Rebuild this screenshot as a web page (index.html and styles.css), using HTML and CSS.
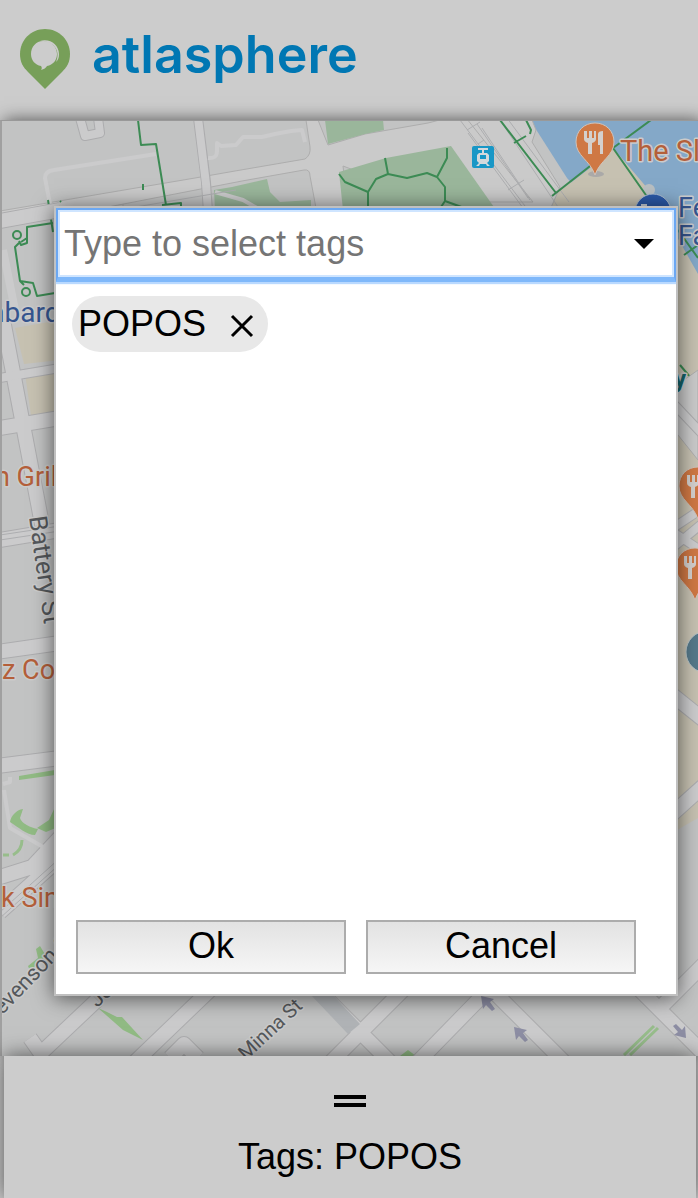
FILE: index.html
```html
<!DOCTYPE html>
<html lang="en">
<head>
<meta charset="utf-8">
<meta name="viewport" content="width=device-width, initial-scale=1">
<title>atlasphere</title>
<link rel="stylesheet" href="styles.css">
</head>
<body>
<div class="app">
  <header class="header">
    <svg class="logo-pin" viewBox="0 0 50 60" aria-hidden="true">
      <path fill="#779f59" d="M25 0C11 0 0 11 0 25c0 8 3 13 8 18l17 17 17-17c5-5 8-10 8-18C50 11 39 0 25 0z"/>
      <path fill="#ccc" d="M23 12c-7 0-12 6-12 13 0 6 4 11 10 12 1 1 1 3 0 4 3-1 5-2 6-4 6-1 10-6 10-12 0-7-6-13-14-13z"/>
      <path fill="#ccc" d="M20 12c10-3 19 4 19 13 0 4-1 6-3 8 5-11-2-21-16-21z"/>
    </svg>
    <span class="logo-name">atlasphere</span>
  </header>

  <main class="map">
    <svg class="map-canvas" viewBox="2 121 696 935" preserveAspectRatio="xMidYMid slice" aria-hidden="true">
      <rect y="120" width="698" height="936" fill="#c2c3c3"/>

      <!-- waterfront -->
      <path class="water" d="M530 120h168v200L600 215l-33-37z"/>
      <path class="land" d="M548 200l46-35 20-16 40 47 44 78v600H640V300z"/>
      <path class="street" d="M440 120h92l4 10-4 12 28 45-10 23h-60z"/>
      <circle cx="649" cy="190" r="6" fill="#b9bfc2"/>

      <!-- embarcadero and side streets -->
      <path class="street" d="M0 211l195-33 40-7 70-12q6-4 5-12l-4-27h12l10 25 37-11 63-11 35-9 70 88h-95l-95-36 5 42h-32l-6-32q0-7-6-6l-62 11L0 228z"/>
      <path class="casing w10" d="M80 118l5 18 15-3-2-15M198 118l8 64 2 30"/>
      <path class="road w8" d="M80 118l5 18 15-3-2-15M198 118l8 66 2 28"/>
      <path class="road w4" d="M50 204l-5-26q0-7 9-8l102-16M208 158q9 1 9-7v-8l4 3 15-1 7-8h19l13-3 16-3 11-1 3 12"/>
      <path class="park" d="M325 120h58l1 10-19 4-37 10zM232 187l35-8 3 13 10 10 31-2v10h-96l-1-20z"/>
      <path class="park" d="M339 172l47-14 65-12 45 64H343z"/>
      <path class="road w4" d="M215 192l28 8 14 8"/>
      <path class="rail" d="M460 120l68 90M467 130l13-8M468 133l55 75M477 124l51 74M482 128l48 72M500 120l60 90M507 118l62 84M478 144l6-4M508 190l16-10M118 210l118-20M123 204v6"/>

      <path class="trail" d="M138 120l3 25 15-1 10 61M162 205l19-2v6M48 200l5 32M143 184v6M60 201l1 1"/>
      <path class="trail" d="M339 174l6 8 23 10v18M368 192l8-13 12-5 19 4 20-5 10 4 10-19v-10M385 158l3 16M437 177l8 10v14l22 8M445 201l-4 6"/>
      <path class="trail" d="M500 120l56 73M526 120l5 10-1 4M526 136l-12 7M651 120l-38 28-61 48M613 148l35 50M678 230l20 28M684 255l14-10M680 365l10 12"/>

      <!-- west blocks -->
      <path class="casing w16" d="M-5 222l65-12"/><path class="road w14" d="M-5 222l65-12"/>
      <path class="road w8" d="M3 250l12 60"/>
      <path class="land" d="M15 328l45-8v40l-36 4zM25 373l35-5v45l-29 3z"/>
      <path class="casing w16" d="M3 320l42 220"/>
      <path class="casing w10" d="M0 378l60-10"/>
      <path class="casing w16" d="M0 428l60-10"/>
      <path class="road w14" d="M3 320l42 220M0 428l60-10"/>
      <path class="road w8" d="M0 378l60-10"/>
      <path class="casing w16" d="M0 540l60-10"/><path class="road w14" d="M0 540l60-10"/>
      <path class="rail" d="M0 535l60-9M0 540l60-9"/>
      <path class="casing w16" d="M-3 652l63-9M-3 766l63-8"/><path class="road w14" d="M-3 652l63-9M-3 766l63-8"/>
      <path class="trail" d="M53 223l-26 4v16l-6 2-2-4M19 243l-4 4 5 34 13 2 4 13 18-3M27 238l-6 4M20 281l4 4"/>
      <circle class="trail" cx="17" cy="235" r="4"/><circle class="trail" cx="26" cy="292" r="4"/>
      <path class="casing w16" d="M0 877l32-10 32-34M60 858l-60 54"/>
      <path class="road w14" d="M0 877l32-10 32-34M60 858l-60 54"/>
      <path class="road w4" d="M3 784l7-2v-5M4 790l6 38 35 20"/>
      <path class="rail" d="M60 858l-60 54M60 864l-60 54"/>
      <path class="grass" d="M19 776l36-6v5l-36 5zM23 809c-7 1-12 7-13 13 8 5 17 13 25 13l3-6c-7-1-17-6-18-11zM55 807l-6 13-12 8 9 4 12-5zM36 949l4-3 6 10-16 15-2-5 10-8zM98 1008l9 4 10 5 5 0 21 23-20-10zM400 1056l8-6 8 6z"/>
      <path class="grass-line" d="M22 840q0 10-9 15M3 855h6M624 1055l30-29M630 1055l28-27"/>

      <!-- south blocks -->
      <path class="casing w16" d="M30 1038l14 20M42 1052l55-52M135 1062l75-72M170 1058l14-14 14 14M410 1070l80-82 80 80M320 992l90 90M325 1068l80-80M630 980l80 80M660 1008l44-44"/>
      <path class="road w14" d="M30 1038l14 20M42 1052l55-52M135 1062l75-72M170 1058l14-14 14 14M410 1070l80-82 80 80M320 992l90 90M325 1068l80-80M630 980l80 80M660 1008l44-44"/>
      <path d="M310 994h22l28 30-12 10z" fill="#b0b3b6"/>
      <g fill="#8d8ea4">
        <path d="M481 996l13 3-4 3 5 7-3 2-6-6-3 4zM514 1027l13 3-4 3 5 7-3 2-6-6-3 4z"/>
        <path d="M686 1038l-12-3 4-3-5-6 3-2 6 6 3-4z"/>
      </g>

      <!-- east blocks -->
      <path class="street" d="M670 390l28-20v90l-28-35z"/>
      <path class="casing w10" d="M670 400l38 40M670 530l30-20M670 530l30 20M670 550l34-28"/>
      <path class="road w8" d="M670 400l38 40M670 530l30-20M670 530l30 20M670 550l34-28"/>
      <path class="casing w16" d="M670 693l40 32M670 816l40-36"/><path class="road w14" d="M670 693l40 32M670 816l40-36"/>
      <path d="M670 834l28-16v120h-28z" fill="#c2c3c3"/>

      <!-- place markers -->
      <rect x="472" y="146" width="22" height="22" rx="2" fill="#1997c6"/>
      <path fill="#d4d9dc" fill-rule="evenodd" d="M478 148h10v2h-4v3h3l2 2v6l-2 2 3 3h-3l-1-2h-6l-1 2h-3l3-3-2-2v-6l2-2h3v-3h-4zm2 7v4h6v-4z"/>
      <ellipse cx="596" cy="174" rx="8" ry="3" fill="#aaa9a8"/>
      <g id="pin">
        <path class="pin" d="M595 123c-11 0-19 8-19 19 0 14 14 18 19 33 5-15 19-19 19-33 0-11-8-19-19-19z"/>
        <path class="cutlery" d="M584 131v8c0 3 4 4 4 4v11h4v-11s4-1 4-4v-8h-2v7h-2v-7h-3v7h-2v-7zM598 134v11h2v9h3v-23c-3 0-5 1-5 3z"/>
      </g>
      <use href="#pin" x="103" y="344"/>
      <use href="#pin" x="100" y="425"/>
      <circle cx="707" cy="652" r="21" fill="#56798a" stroke="#b8c4c7"/>
      <circle cx="653" cy="212" r="18" fill="#2b59a8" stroke="#aebfd2"/>
      <path fill="#cbd3dc" d="M641 204h6v3h6v3h-12z"/>

      <g class="labels">
        <text class="food" x="620" y="161" font-size="29">The Slanted Door</text>
        <text class="shop" x="678" y="217" font-size="27">Ferry Building</text>
        <text class="shop" x="678" y="245" font-size="27">Farmers Market</text>
        <text class="shop" x="-51" y="322" font-size="28">Lombard</text>
        <text class="food" x="-5" y="486" font-size="27">n Grill</text>
        <text class="food" x="2" y="679" font-size="27">z Coffee</text>
        <text class="food" x="1" y="907" font-size="27">k Singh</text>
        <text class="street-name" transform="translate(29 517) rotate(82)" font-size="25">Battery St</text>
        <text class="street-name" transform="translate(-12 1030) rotate(-46)" font-size="22">Stevenson St</text>
        <text class="street-name" transform="translate(246 1061) rotate(-43)" font-size="20">Minna St</text>
        <text class="street-name" transform="translate(97 1008) rotate(-42)" font-size="21">Jessie St</text>
        <text class="transit" x="674" y="387" font-size="24">y</text>
      </g>
    </svg>

    <div class="overlay">
      <form class="dialog" role="dialog" aria-label="Select tags">
        <div class="combo">
          <input class="combo-input" type="text" list="tag-options" placeholder="Type to select tags" aria-label="Type to select tags">
          <datalist id="tag-options"><option value="POPOS"></option></datalist>
          <button class="combo-toggle" type="button" aria-label="Show tags">
            <svg viewBox="0 0 20 10" width="20" height="10"><path d="M0 0h20L10 10z"/></svg>
          </button>
        </div>
        <div class="chips">
          <span class="chip">POPOS
            <button class="chip-remove" type="button" aria-label="Remove POPOS">
              <svg viewBox="0 0 24 24" width="24" height="24"><path d="M2 2l20 20M22 2L2 22" fill="none" stroke="#000" stroke-width="3"/></svg>
            </button>
          </span>
        </div>
        <div class="actions">
          <button class="action" type="button">Ok</button>
          <button class="action" type="button">Cancel</button>
        </div>
      </form>
    </div>
  </main>

  <footer class="sheet">
    <button class="handle" type="button" aria-label="Expand panel"></button>
    <p class="summary">Tags: POPOS</p>
  </footer>
</div>
</body>
</html>
```

FILE: styles.css
```css
* {
  box-sizing: border-box;
}

body {
  margin: 0;
  background: #ccc;
  color: #000;
  font-family: "Liberation Sans", Arial, sans-serif;
  font-size: 36px;
}

button {
  padding: 0;
  border: 0;
  background: none;
  color: inherit;
  font: inherit;
}

.app {
  display: flex;
  flex-direction: column;
  min-height: 100vh;
}

.header {
  display: flex;
  align-items: center;
  gap: 22px;
  height: 120px;
  padding: 0 20px 2px;
}

.logo-pin {
  width: 50px;
  height: 60px;
}

.logo-name {
  padding-bottom: 8px;
  color: #0077b3;
  font: 600 52px/60px Inter, sans-serif;
}

.map {
  position: relative;
  flex: 1;
  min-height: 560px;
  border-top: 1px solid #999;
  border-left: 2px solid #a0a0a0;
  box-shadow: 4px 0 16px rgba(0, 0, 0, 0.6);
}

.map-canvas {
  position: absolute;
  inset: 0;
  width: 100%;
  height: 100%;
}

.street {
  fill: #cacaca;
  stroke: #adadad;
}

.water { fill: #84a8c8; }
.land { fill: #c6c1b1; }
.park { fill: #9ab69b; }
.grass { fill: #91bb84; }

.grass-line {
  fill: none;
  stroke: #97bd8b;
  stroke-width: 3;
}

.casing,
.road,
.rail,
.trail {
  fill: none;
  stroke-linejoin: round;
}

.casing { stroke: #acacae; }
.road { stroke: #cbcbcc; }
.rail { stroke: #adaeb0; stroke-width: 1; }
.trail { stroke: #3c8b54; stroke-width: 2; }
.w4 { stroke-width: 4; }
.w8 { stroke-width: 8; }
.w10 { stroke-width: 10; }
.w14 { stroke-width: 14; }
.w16 { stroke-width: 16; }

.pin {
  fill: #cf7844;
  stroke: #d0c3ba;
}

.cutlery { fill: #d4d0cd; }

.labels {
  font-family: Roboto, sans-serif;
  paint-order: stroke;
  stroke: #cbcbcb;
  stroke-width: 3;
  stroke-linejoin: round;
}

.food { fill: #b45f3a; }
.shop { fill: #35558f; }
.street-name { fill: #55585b; }
.transit { fill: #14646c; font-weight: 700; }

.overlay {
  position: absolute;
  inset: 0;
  display: flex;
  padding: 85px 20px 60px 52px;
}

.dialog {
  flex: 1;
  display: flex;
  flex-direction: column;
  border: 2px solid #c0c0c0;
  background: #fff;
  box-shadow: 0 2px 20px rgba(0, 0, 0, 0.6);
}

.combo {
  display: flex;
  align-items: center;
  height: 74px;
  padding: 0 20px 0 4px;
  border: 2px solid #6ba7f2;
  border-bottom: 5px solid #7fb8fa;
  box-shadow: inset 0 0 0 2px #cfe5ff, 0 2px 1px #b9d9ff;
}

.combo-input {
  flex: 1;
  min-width: 0;
  height: 60px;
  padding: 0 2px;
  border: 0;
  outline: 0;
  background: none;
  font: inherit;
}

.combo-input::placeholder {
  color: #757575;
  opacity: 1;
}

.combo-input::-webkit-calendar-picker-indicator {
  display: none !important;
}

.combo-toggle {
  display: flex;
}

.chips {
  flex: 1;
  padding: 14px 16px;
}

.chip {
  display: inline-flex;
  align-items: center;
  gap: 24px;
  height: 56px;
  padding: 0 14px 0 6px;
  border-radius: 28px;
  background: #e8e8e8;
}

.chip-remove {
  display: flex;
  padding-top: 4px;
}

.actions {
  display: flex;
  gap: 20px;
  padding: 0 40px 20px 20px;
}

.action {
  flex: 1;
  height: 54px;
  padding-bottom: 2px;
  border: 2px solid #acacac;
  background: linear-gradient(#e2e2e2, #f6f6f6);
}

.sheet {
  position: relative;
  display: flex;
  flex-direction: column;
  align-items: center;
  gap: 28px;
  margin: 0 2px 0 4px;
  padding: 39px 0 19px;
  background: #ccc;
  box-shadow: 0 0 20px rgba(0, 0, 0, 0.6);
}

.handle {
  width: 32px;
  height: 12px;
  border: solid #000;
  border-width: 4px 0;
}

.summary {
  margin: 0;
  line-height: 44px;
}
```
